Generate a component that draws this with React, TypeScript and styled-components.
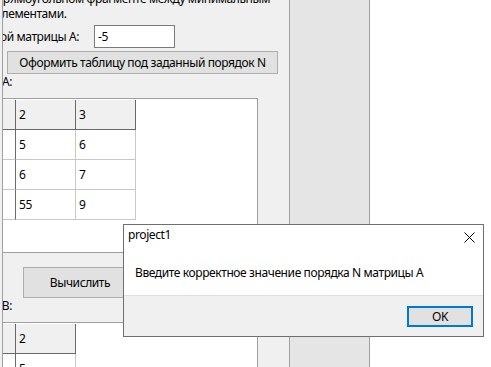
import React from "react";
import styled, { createGlobalStyle } from "styled-components";

/* global */

const GlobalStyle = createGlobalStyle`
  html, body {
    margin: 0;
    padding: 0;
  }
  body {
    font-family: "Noto Sans", "Liberation Sans", sans-serif;
    font-size: 12px;
    letter-spacing: -0.4px;
    color: #000;
    background: #fff;
  }
  * {
    box-sizing: border-box;
  }
`;

/* main window */

const Screen = styled.div`
  position: relative;
  display: flex;
  width: 491px;
  height: 367px;
  overflow: hidden;
  background: #fff;
`;

const Gutter = styled.div`
  flex: none;
  width: 2px;
  background: #f0f0f0;
`;

const ScrollBox = styled.div`
  flex: none;
  width: 288px;
  display: flex;
  flex-direction: column;
  align-items: flex-start;
  background: #f0f0f0;
  border-left: 1px solid #a0a0a0;
  border-right: 1px solid #a0a0a0;
  overflow: hidden;

  & > * {
    flex: none;
  }
`;

const SidePanel = styled.div`
  flex: none;
  width: 80px;
  background: #e5e5e5;
  border-right: 1px solid #a0a0a0;
`;

const WhiteArea = styled.div`
  flex: 1;
  background: #fff;
`;

const Description = styled.div`
  margin-top: -9px;
`;

const Line = styled.div<{ $indent: number }>`
  margin-left: -${(p) => p.$indent}px;
  line-height: 15px;
  white-space: nowrap;
`;

// caption whose left part is scrolled out of view
const Caption = styled.div<{ $width: number }>`
  display: flex;
  justify-content: flex-end;
  width: ${(p) => p.$width}px;
  height: 15px;
  overflow: hidden;
  line-height: 15px;
  white-space: nowrap;
`;

const InputRow = styled.div`
  display: flex;
  align-items: center;
  gap: 15px;
  height: 23px;
  margin-top: 4px;
`;

const TextInput = styled.input`
  width: 81px;
  height: 23px;
  padding: 0 3px;
  border: 1px solid #7a7a7a;
  background: #fff;
  font: inherit;
  letter-spacing: inherit;
  color: #000;
  outline: none;
`;

const Button = styled.button<{ $width: number; $height: number; $left: number; $top: number }>`
  width: ${(p) => p.$width}px;
  height: ${(p) => p.$height}px;
  margin-left: ${(p) => p.$left}px;
  margin-top: ${(p) => p.$top}px;
  padding: 0;
  background: #e1e1e1;
  border: 1px solid #adadad;
  font: inherit;
  letter-spacing: inherit;
  color: #000;
  white-space: nowrap;
`;

/* string grid */

const Grid = styled.div<{ $top: number }>`
  width: 304px;
  height: 155px;
  margin-left: -49px;
  margin-top: ${(p) => p.$top}px;
  padding: 1px;
  background: #fff;
  border: 1px solid #a0a0a0;
`;

const GridRow = styled.div`
  display: flex;
`;

const Cell = styled.div<{ $fixed?: boolean; $header?: boolean }>`
  width: 60px;
  height: 30px;
  padding-left: 3px;
  line-height: 29px;
  background: ${(p) => (p.$header ? "#f0f0f0" : "#fff")};
  border-right: 1px solid ${(p) => (p.$header || p.$fixed ? "#696969" : "#c8c8c8")};
  border-bottom: 1px solid ${(p) => (p.$header ? "#696969" : "#c8c8c8")};
`;

/* message box */

const Dialog = styled.div`
  position: absolute;
  left: 123px;
  top: 224px;
  width: 361px;
  height: 113px;
  display: flex;
  flex-direction: column;
  background: #fff;
  border: 1px solid #6f6f6f;
`;

const TitleBar = styled.div`
  display: flex;
  justify-content: space-between;
  height: 30px;
  padding: 2px 8px 0 4px;
  line-height: 15px;
`;

const CloseIcon = styled.svg`
  margin-top: 5px;
`;

const Message = styled.div`
  height: 40px;
  padding: 10px 0 0 11px;
  line-height: 15px;
`;

const Footer = styled.div`
  flex: 1;
  display: flex;
  justify-content: flex-end;
  padding: 10px 10px 0 0;
  background: #f0f0f0;
  border-top: 1px solid #dfdfdf;
`;

const OkButton = styled.button`
  width: 66px;
  height: 21px;
  padding: 0;
  background: #e1e1e1;
  border: 2px solid #0078d7;
  font: inherit;
  letter-spacing: inherit;
  color: #000;
`;

const gridA = [
  ["", "2", "3"],
  ["", "5", "6"],
  ["", "6", "7"],
  ["", "55", "9"],
];

const gridB = [
  ["", "2"],
  ["", "5"],
  ["", "6"],
  ["", "55"],
];

const StringGrid: React.FC<{ rows: string[][]; top: number }> = ({ rows, top }) => (
  <Grid $top={top}>
    {rows.map((row, r) => (
      <GridRow key={r}>
        {row.map((value, c) => (
          <Cell key={c} $header={r === 0} $fixed={c === 0}>
            {value}
          </Cell>
        ))}
      </GridRow>
    ))}
  </Grid>
);

const App: React.FC = () => {
  return (
    <Screen>
      <GlobalStyle />
      <Gutter />
      <ScrollBox>
        <Description>
          <Line $indent={7}>прямоугольном фрагменте между минимальным</Line>
          <Line $indent={7}>элементами.</Line>
        </Description>

        <InputRow>
          <Caption $width={76}>Порядок квадратной матрицы А:</Caption>
          <TextInput defaultValue="-5" readOnly />
        </InputRow>

        <Button $width={271} $height={23} $left={4} $top={3}>
          Оформить таблицу под заданный порядок N
        </Button>

        <Caption $width={9}>Матрица А:</Caption>
        <StringGrid rows={gridA} top={9} />

        <Button $width={114} $height={31} $left={20} $top={14}>
          Вычислить
        </Button>

        <Caption $width={9}>Матрица В:</Caption>
        <StringGrid rows={gridB} top={9} />
      </ScrollBox>
      <SidePanel />
      <WhiteArea />

      <Dialog>
        <TitleBar>
          <span>project1</span>
          <CloseIcon width="11" height="11" viewBox="0 0 11 11">
            <path d="M0.5 0.5 L10.5 10.5 M10.5 0.5 L0.5 10.5" stroke="#000" strokeWidth="1" />
          </CloseIcon>
        </TitleBar>
        <Message>Введите корректное значение порядка N матрицы А</Message>
        <Footer>
          <OkButton>OK</OkButton>
        </Footer>
      </Dialog>
    </Screen>
  );
};

export default App;
